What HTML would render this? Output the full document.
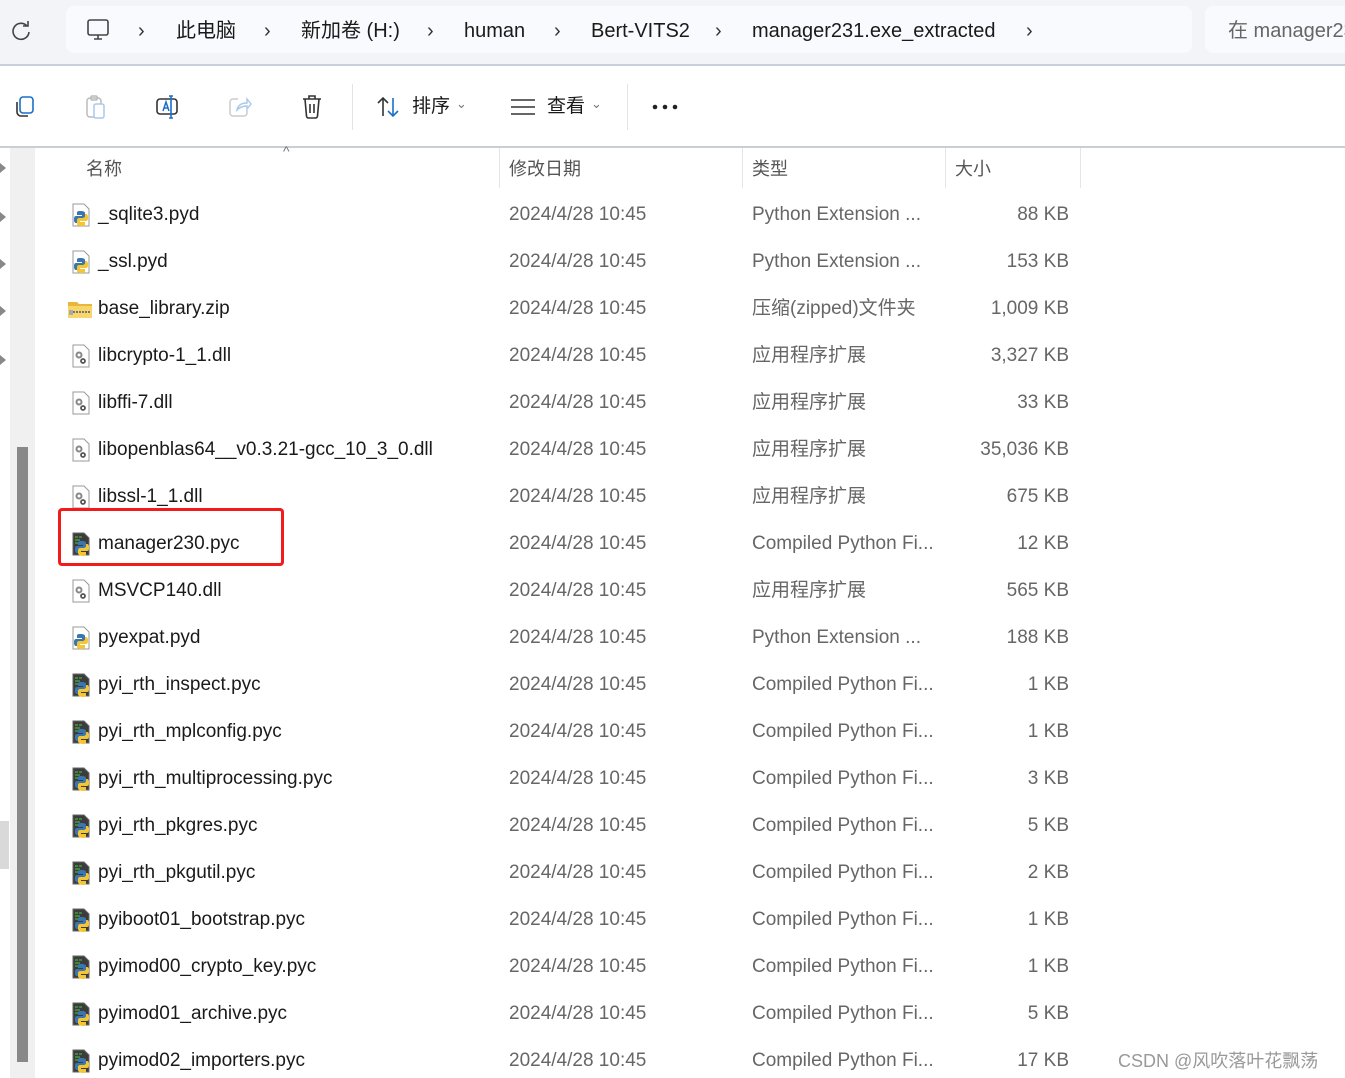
<!DOCTYPE html>
<html><head><meta charset="utf-8">
<style>
*{margin:0;padding:0;box-sizing:border-box}
body{width:1345px;height:1078px;overflow:hidden;background:#fff;font-family:"Liberation Sans","Noto Sans CJK SC",sans-serif;position:relative;color:#1a1a1a}
.a{position:absolute;white-space:nowrap}
.top{left:0;top:0;width:1345px;height:64px;background:#f3f4f8}
.addr{left:66px;top:6px;width:1126px;height:47px;background:#f9fafd;border-radius:8px}
.search{left:1205px;top:6px;width:160px;height:47px;background:#f9fafd;border-radius:8px}
.bc{top:18px;font-size:20px;line-height:26px;height:26px;color:#1a1a1a}
.chev{top:18px;font-size:20px;line-height:26px;color:#333}
.row{font-size:19px;height:24px;line-height:24px}
.nm{left:98px;color:#1a1a1a}
.dt{left:509px;color:#666}
.ty{left:752px;color:#666}
.sz{left:940px;width:129px;text-align:right;color:#666}
.ic{left:70px;width:22px;height:24px}
.hd{top:157px;font-size:18px;line-height:24px;color:#555}
.sep{top:148px;width:1px;height:40px;background:#e5e5e5}
</style></head><body>
<div class="a top"></div>
<div class="a" style="left:0;top:64px;width:1345px;height:2px;background:#c9cfd9"></div>
<div class="a addr"></div>
<div class="a search"></div>
<svg class="a" style="left:10px;top:20px" width="22" height="22" viewBox="0 0 22 22"><path d="M17 6A8 8 0 1 0 19 12" fill="none" stroke="#444" stroke-width="1.6"/><path d="M13 6h5V1" fill="none" stroke="#444" stroke-width="1.6"/></svg>
<svg class="a" style="left:86px;top:18px" width="24" height="24" viewBox="0 0 24 24"><rect x="2" y="2" width="20" height="15" rx="2" fill="none" stroke="#444" stroke-width="1.6"/><path d="M8 21h8M12 17v4" stroke="#444" stroke-width="1.6"/></svg>
<div class="a chev" style="left:138px">›</div>
<div class="a bc" style="left:176px">此电脑</div>
<div class="a chev" style="left:264px">›</div>
<div class="a bc" style="left:301px">新加卷 (H:)</div>
<div class="a chev" style="left:427px">›</div>
<div class="a bc" style="left:464px">human</div>
<div class="a chev" style="left:554px">›</div>
<div class="a bc" style="left:591px">Bert-VITS2</div>
<div class="a chev" style="left:715px">›</div>
<div class="a bc" style="left:752px">manager231.exe_extracted</div>
<div class="a chev" style="left:1026px">›</div>
<div class="a bc" style="left:1228px;color:#666">在 manager231</div>

<svg class="a" style="left:12px;top:95px" width="24" height="24" viewBox="0 0 24 24"><rect x="8" y="2" width="13" height="16" rx="3" fill="none" stroke="#1a6fc9" stroke-width="1.6"/><path d="M5 7v10a4 4 0 0 0 4 4h7" fill="none" stroke="#333" stroke-width="1.6"/></svg>
<svg class="a" style="left:84px;top:94px" width="24" height="26" viewBox="0 0 24 26"><rect x="3" y="4" width="14" height="19" rx="3" fill="none" stroke="#bbb" stroke-width="1.5"/><rect x="7" y="2" width="6" height="4" rx="1" fill="none" stroke="#bbb" stroke-width="1.5"/><rect x="10" y="10" width="10" height="14" rx="2" fill="#fff" stroke="#a9c8ea" stroke-width="1.5"/></svg>
<svg class="a" style="left:155px;top:95px" width="26" height="24" viewBox="0 0 26 24"><rect x="2" y="4" width="20" height="15" rx="3" fill="none" stroke="#333" stroke-width="1.6"/><path d="M8 16l3-9 3 9M9 13h4" fill="none" stroke="#1a6fc9" stroke-width="1.5"/><path d="M16 1v22M14 1h4M14 23h4" stroke="#1a6fc9" stroke-width="1.6" fill="none"/></svg>
<svg class="a" style="left:228px;top:95px" width="24" height="24" viewBox="0 0 24 24"><path d="M10 4H5a3 3 0 0 0-3 3v11a3 3 0 0 0 3 3h11a3 3 0 0 0 3-3v-3" fill="none" stroke="#ccc" stroke-width="1.5"/><path d="M9 15c1-5 5-7 10-7V4l4 5-4 5v-3c-4 0-7 1-10 4z" fill="none" stroke="#a9c8ea" stroke-width="1.4"/></svg>
<svg class="a" style="left:301px;top:94px" width="22" height="26" viewBox="0 0 22 26"><path d="M2 5h18M8 5V2h6v3M4 5l1.5 17a2 2 0 0 0 2 2h7a2 2 0 0 0 2-2L18 5M9 10v9M13 10v9" fill="none" stroke="#333" stroke-width="1.6"/></svg>
<div class="a" style="left:352px;top:84px;width:1px;height:46px;background:#e3e3e3"></div>
<svg class="a" style="left:376px;top:95px" width="26" height="24" viewBox="0 0 26 24"><path d="M7 21V3M2 8l5-5 5 5" fill="none" stroke="#333" stroke-width="1.6"/><path d="M17 3v18M12 16l5 5 5-5" fill="none" stroke="#1a6fc9" stroke-width="1.6"/></svg>
<div class="a" style="left:412px;top:94px;font-size:19px;line-height:26px">排序</div>
<div class="a" style="left:456px;top:96px;font-size:13px;color:#777">⌄</div>
<svg class="a" style="left:510px;top:97px" width="26" height="20" viewBox="0 0 26 20"><path d="M1 3h24M1 10h24M1 17h24" stroke="#333" stroke-width="1.6"/></svg>
<div class="a" style="left:547px;top:94px;font-size:19px;line-height:26px">查看</div>
<div class="a" style="left:591px;top:96px;font-size:13px;color:#777">⌄</div>
<div class="a" style="left:627px;top:84px;width:1px;height:46px;background:#e3e3e3"></div>
<svg class="a" style="left:652px;top:104px" width="26" height="6" viewBox="0 0 26 6"><circle cx="3" cy="3" r="2.3" fill="#222"/><circle cx="13" cy="3" r="2.3" fill="#222"/><circle cx="23" cy="3" r="2.3" fill="#222"/></svg>
<div class="a" style="left:0;top:146px;width:1345px;height:2px;background:#c9cfd9"></div>

<div class="a" style="left:10px;top:148px;width:25px;height:930px;background:#f0f0f0"></div>
<div class="a" style="left:17px;top:447px;width:11px;height:615px;background:#888"></div>
<div class="a" style="left:0;top:821px;width:9px;height:48px;background:#d9d9d9"></div>
<div class="a" style="left:0;top:163px;width:0;height:0;border-left:6px solid #888;border-top:5px solid transparent;border-bottom:5px solid transparent"></div>
<div class="a" style="left:0;top:212px;width:0;height:0;border-left:6px solid #888;border-top:5px solid transparent;border-bottom:5px solid transparent"></div>
<div class="a" style="left:0;top:259px;width:0;height:0;border-left:6px solid #888;border-top:5px solid transparent;border-bottom:5px solid transparent"></div>
<div class="a" style="left:0;top:306px;width:0;height:0;border-left:6px solid #888;border-top:5px solid transparent;border-bottom:5px solid transparent"></div>
<div class="a" style="left:0;top:355px;width:0;height:0;border-left:6px solid #888;border-top:5px solid transparent;border-bottom:5px solid transparent"></div>

<div class="a" style="left:283px;top:143px;font-size:14px;color:#777">^</div>
<div class="a hd" style="left:86px">名称</div>
<div class="a sep" style="left:499px"></div>
<div class="a hd" style="left:509px">修改日期</div>
<div class="a sep" style="left:742px"></div>
<div class="a hd" style="left:752px">类型</div>
<div class="a sep" style="left:945px"></div>
<div class="a hd" style="left:955px">大小</div>
<div class="a sep" style="left:1080px"></div>

<div id="rows"></div>

<div class="a" style="left:58px;top:508px;width:226px;height:58px;border:3px solid #f01c1c;border-radius:4px"></div>
<div class="a" style="left:1118px;top:1047px;font-size:18px;color:#999">CSDN @风吹落叶花飘荡</div>

<script>
var P='<svg class="a ic" style="top:TOPpx" viewBox="0 0 22 24"><path d="M3 1h11l5 5v17H3z" fill="#fff" stroke="#999"/><path d="M10 8c-3 0-3 1-3 2v2h5v1H6c-2 0-2 2-2 4s1 3 2 3h1v-2c0-1 1-2 3-2h3c1 0 2-1 2-2v-4c0-1-1-2-5-2z" fill="#3a76b0"/><path d="M12 23c3 0 3-1 3-2v-2h-5v-1h6c2 0 2-2 2-4s-1-3-2-3h-1v2c0 1-1 2-3 2H9c-1 0-2 1-2 2v4c0 1 1 2 5 2z" fill="#f5c633"/></svg>';
var C='<svg class="a ic" style="top:TOPpx" viewBox="0 0 22 24"><path d="M3 1h11l5 5v17H3z" fill="#3c3c3c" stroke="#666"/><path d="M5 5h3M9 5h3M5 8h5M5 11h3" stroke="#4c4" stroke-width="1"/><path d="M11 9c-3 0-3 1-3 2v2h5v1H7c-2 0-2 2-2 4s1 3 2 3h1v-2c0-1 1-2 3-2h3c1 0 2-1 2-2v-4c0-1-1-2-5-2z" fill="#3a76b0"/><path d="M13 24c3 0 3-1 3-2v-2h-5v-1h6c2 0 2-2 2-4s-1-3-2-3h-1v2c0 1-1 2-3 2h-3c-1 0-2 1-2 2v3c0 1 1 3 5 3z" fill="#f5c633"/></svg>';
var D='<svg class="a ic" style="top:TOPpx" viewBox="0 0 22 24"><path d="M3 1h11l5 5v17H3z" fill="#fff" stroke="#999"/><circle cx="9" cy="11" r="2.5" fill="none" stroke="#888" stroke-width="2"/><circle cx="13" cy="17" r="2" fill="none" stroke="#555" stroke-width="1.8"/></svg>';
var Z='<svg class="a" style="left:67px;top:TOPpx;width:26px;height:24px" viewBox="0 0 26 24"><path d="M1 5h9l2 2h13v14H1z" fill="#e7b73c"/><rect x="1" y="9" width="24" height="12" fill="#f8d66a"/><path d="M3 15h20" stroke="#777" stroke-width="2" stroke-dasharray="2 1"/><rect x="2" y="13" width="4" height="5" fill="#aaa"/></svg>';
var r=[['_sqlite3.pyd','Python Extension ...','88 KB',P],['_ssl.pyd','Python Extension ...','153 KB',P],['base_library.zip','压缩(zipped)文件夹','1,009 KB',Z],['libcrypto-1_1.dll','应用程序扩展','3,327 KB',D],['libffi-7.dll','应用程序扩展','33 KB',D],['libopenblas64__v0.3.21-gcc_10_3_0.dll','应用程序扩展','35,036 KB',D],['libssl-1_1.dll','应用程序扩展','675 KB',D],['manager230.pyc','Compiled Python Fi...','12 KB',C],['MSVCP140.dll','应用程序扩展','565 KB',D],['pyexpat.pyd','Python Extension ...','188 KB',P],['pyi_rth_inspect.pyc','Compiled Python Fi...','1 KB',C],['pyi_rth_mplconfig.pyc','Compiled Python Fi...','1 KB',C],['pyi_rth_multiprocessing.pyc','Compiled Python Fi...','3 KB',C],['pyi_rth_pkgres.pyc','Compiled Python Fi...','5 KB',C],['pyi_rth_pkgutil.pyc','Compiled Python Fi...','2 KB',C],['pyiboot01_bootstrap.pyc','Compiled Python Fi...','1 KB',C],['pyimod00_crypto_key.pyc','Compiled Python Fi...','1 KB',C],['pyimod01_archive.pyc','Compiled Python Fi...','5 KB',C],['pyimod02_importers.pyc','Compiled Python Fi...','17 KB',C]];
var h='';
r.forEach(function(x,i){var y=203+i*47;
h+=x[3].replace('TOP',y);
h+='<div class="a row nm" style="top:'+y+'px">'+x[0]+'</div><div class="a row dt" style="top:'+y+'px">2024/4/28 10:45</div><div class="a row ty" style="top:'+y+'px">'+x[1]+'</div><div class="a row sz" style="top:'+y+'px">'+x[2]+'</div>';});
document.getElementById('rows').innerHTML=h;
</script>
</body></html>
